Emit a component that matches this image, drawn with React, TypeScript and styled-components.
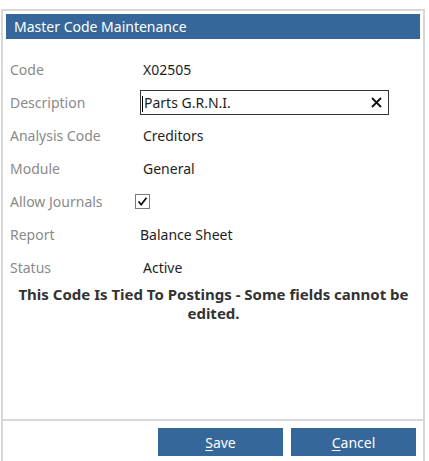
import styled, { createGlobalStyle } from "styled-components"

const GlobalStyle = createGlobalStyle`
    html, body {
        margin: 0;
        padding: 0;
        background: #ffffff;
    }
    body {
        font-family: "Noto Sans", "Open Sans", Arial, sans-serif;
        font-size: 14px;
        color: #1e1e1e;
    }
`

const Panel = styled.div`
    box-sizing: border-box;
    margin: 9px 0 0 1px;
    width: 424px;
    height: 452px;
    border: 2px solid #d7d7d7;
    border-bottom: none;
    display: flex;
    flex-direction: column;
`

const Header = styled.div`
    margin: 3px 3px 0 3px;
    height: 25px;
    background: #35679a;
    color: #ffffff;
    font-size: 14px;
    line-height: 25px;
    padding-left: 8px;
`

const Form = styled.div`
    flex: 1;
    padding: 14px 0 0 7px;
`

const Row = styled.div`
    display: flex;
    align-items: center;
    height: 33px;
`

const Label = styled.div`
    width: 130px;
    color: #8a8a8a;
`

const Value = styled.div<{ $indent?: number }>`
    margin-left: ${p => p.$indent ?? 3}px;
    color: #1e1e1e;
`

const InputBox = styled.div`
    box-sizing: border-box;
    display: flex;
    align-items: center;
    justify-content: space-between;
    width: 249px;
    height: 25px;
    border: 1px solid #333333;
    padding: 0 6px 0 1px;
    color: #1e1e1e;
`

const Caret = styled.span`
    display: inline-block;
    width: 1px;
    height: 16px;
    background: #000;
    vertical-align: middle;
    margin-right: 1px;
`

const Check = styled.div`
    box-sizing: border-box;
    width: 15px;
    height: 15px;
    border: 1px solid #7a7a7a;
    display: flex;
    align-items: center;
    justify-content: center;
    margin-left: -5px;
`

const Notice = styled.div`
    font-size: 15px;
    font-weight: bold;
    text-align: center;
    color: #333333;
    line-height: 19px;
    padding: 1px 6px 0 0;
`

const Footer = styled.div`
    border-top: 2px solid #d7d7d7;
    height: 42px;
    display: flex;
    justify-content: flex-end;
    align-items: flex-start;
    gap: 8px;
    padding: 7px 7px 0 0;
    box-sizing: border-box;
`

const Button = styled.button`
    width: 125px;
    height: 28px;
    border: none;
    background: #35679a;
    color: #ffffff;
    font-family: inherit;
    font-size: 14px;
    padding: 0;
    cursor: pointer;
    u { text-decoration-thickness: 1px; text-underline-offset: 2px; }
`

export default function App() {
    return <>
        <GlobalStyle />
        <Panel>
            <Header>Master Code Maintenance</Header>
            <Form>
                <Row><Label>Code</Label><Value>X02505</Value></Row>
                <Row>
                    <Label>Description</Label>
                    <InputBox>
                        <span><Caret />Parts G.R.N.I.</span>
                        <svg width="11" height="11" viewBox="0 0 11 11">
                            <path d="M1 1 L10 10 M10 1 L1 10" stroke="#111" strokeWidth="1.8" />
                        </svg>
                    </InputBox>
                </Row>
                <Row><Label>Analysis Code</Label><Value>Creditors</Value></Row>
                <Row><Label>Module</Label><Value>General</Value></Row>
                <Row>
                    <Label>Allow Journals</Label>
                    <Check>
                        <svg width="11" height="11" viewBox="0 0 11 11">
                            <path d="M1.5 5.5 L4.2 8.5 L9.5 1.8" fill="none" stroke="#111" strokeWidth="1.8" />
                        </svg>
                    </Check>
                </Row>
                <Row><Label>Report</Label><Value $indent={0}>Balance Sheet</Value></Row>
                <Row><Label>Status</Label><Value>Active</Value></Row>
                <Notice>This Code Is Tied To Postings - Some fields cannot be edited.</Notice>
            </Form>
            <Footer>
                <Button><u>S</u>ave</Button>
                <Button><u>C</u>ancel</Button>
            </Footer>
        </Panel>
    </>
}
